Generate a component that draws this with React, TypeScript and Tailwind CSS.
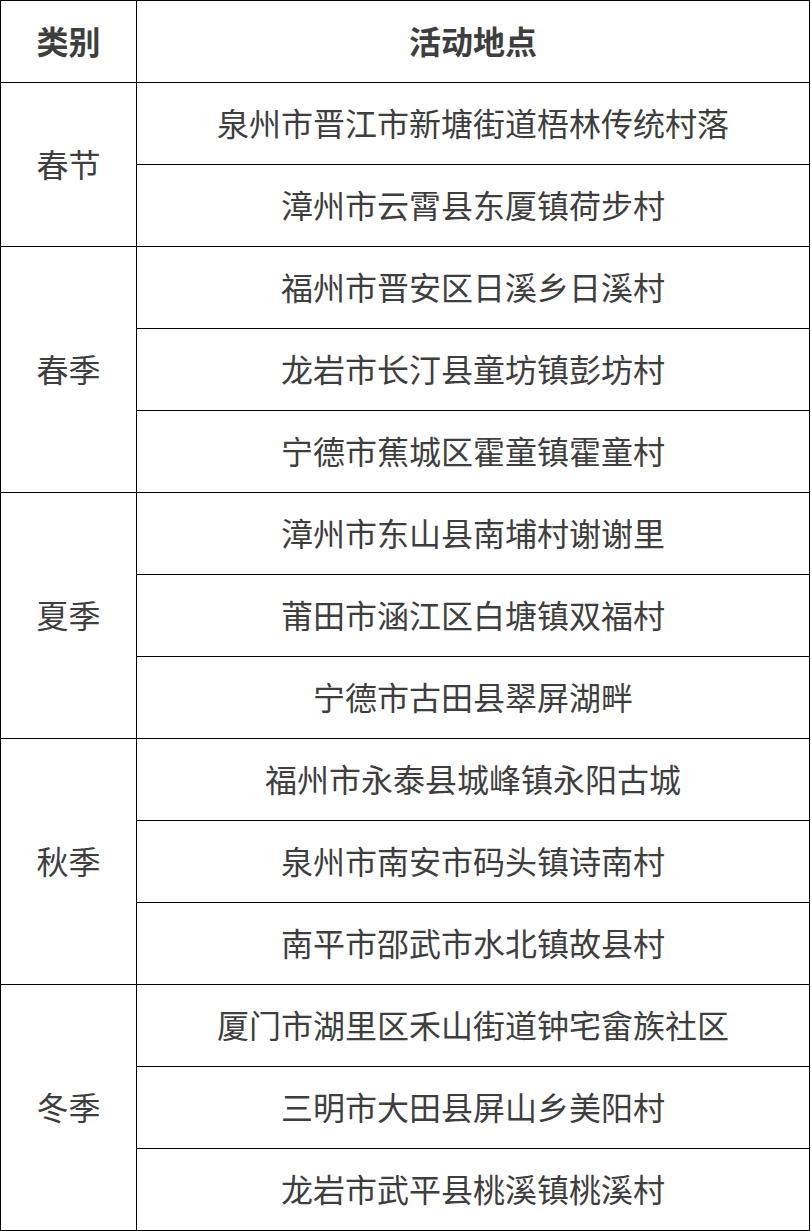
const groups: { name: string; places: string[] }[] = [
  { name: '春节', places: ['泉州市晋江市新塘街道梧林传统村落', '漳州市云霄县东厦镇荷步村'] },
  { name: '春季', places: ['福州市晋安区日溪乡日溪村', '龙岩市长汀县童坊镇彭坊村', '宁德市蕉城区霍童镇霍童村'] },
  { name: '夏季', places: ['漳州市东山县南埔村谢谢里', '莆田市涵江区白塘镇双福村', '宁德市古田县翠屏湖畔'] },
  { name: '秋季', places: ['福州市永泰县城峰镇永阳古城', '泉州市南安市码头镇诗南村', '南平市邵武市水北镇故县村'] },
  { name: '冬季', places: ['厦门市湖里区禾山街道钟宅畲族社区', '三明市大田县屏山乡美阳村', '龙岩市武平县桃溪镇桃溪村'] },
];

export default function App() {
  return (
    <div className="bg-white w-[811px] h-[1231px] font-['Noto_Sans_CJK_SC','Noto_Sans',sans-serif] text-[#3e3e3e]">
      <table className="w-[810px] border-collapse table-fixed">
        <colgroup>
          <col className="w-[136px]" />
          <col />
        </colgroup>
        <thead>
          <tr>
            <th className="h-[82px] pb-1 border border-black text-[32px] font-bold text-center">类别</th>
            <th className="h-[82px] pb-1 border border-black text-[32px] font-bold text-center">活动地点</th>
          </tr>
        </thead>
        <tbody>
          {groups.map((g) =>
            g.places.map((p, i) => (
              <tr key={p}>
                {i === 0 && (
                  <td rowSpan={g.places.length} className="pb-1 border border-black text-[32px] text-center align-middle">
                    {g.name}
                  </td>
                )}
                <td className="h-[82px] pb-1 border border-black text-[32px] text-center align-middle">{p}</td>
              </tr>
            ))
          )}
        </tbody>
      </table>
    </div>
  );
}
